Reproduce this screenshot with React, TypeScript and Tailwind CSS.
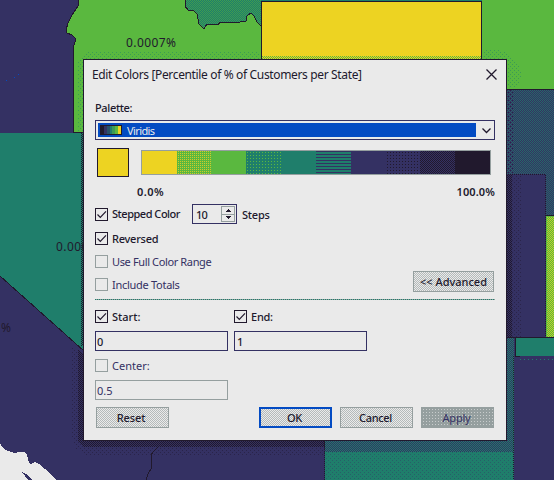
import React from "react";

const UI = "font-['Noto_Sans',sans-serif] text-[11px] leading-[14px] whitespace-nowrap";

const dots =
  "bg-[#e9e9e9] bg-[repeating-conic-gradient(#b4baba_0_25%,#eaeaea_0_50%)] bg-[length:2px_2px]";

function Dither({ id, base, dot, size = 2 }: { id: string; base: string; dot: string; size?: number }) {
  return (
    <pattern id={id} width={size} height={size} patternUnits="userSpaceOnUse">
      <rect width={size} height={size} fill={base} />
      <rect width="1" height="1" fill={dot} />
      <rect x={size / 2} y={size / 2} width="1" height="1" fill={dot} />
    </pattern>
  );
}

function StateMap() {
  return (
    <svg className="absolute inset-0" width="554" height="480" shapeRendering="crispEdges">
      <defs>
        <Dither id="tealGreen" base="#1f7e6b" dot="#3f9c50" />
        <Dither id="tealNavy" base="#343163" dot="#1f7e6b" />
        <Dither id="tealNavySoft" base="#343163" dot="#266868" />
        <Dither id="tealMostly" base="#1f7e6b" dot="#275f69" size={4} />
        <Dither id="yellowGreen" base="#5ab83f" dot="#c4cf2a" />
        <Dither id="yellowEdge" base="#edd322" dot="#5ab83f" />
        <Dither id="shadeDense" base="transparent" dot="#21192d" />
        <Dither id="shadeSparse" base="transparent" dot="#2a244a" size={4} />
        <Dither id="greenShade" base="transparent" dot="#3c9b55" size={4} />
      </defs>
      <rect width="554" height="480" fill="#343163" />
      <path d="M79 0L78 6L72 15L68 23L66 30L67 33L72 35L76 39L74 45L73 52V132H90V89H554V0Z" fill="#5ab83f" />
      <path d="M79 0L78 6L72 15L68 23L66 30L67 33L72 35L76 39L74 45L73 52V132" fill="none" stroke="#21192d" />
      <path d="M185 0V6L188 10L193 10L197 14L199 24L204 29L207 24L218 25L220 22L230 22L240 22L246 21L247 16L251 13L254 16L257 22L261 26V0Z" fill="url(#tealGreen)" />
      <path d="M185 0V6L188 10L193 10L197 14L199 24L204 29L207 24L218 25L220 22L230 22L240 22L246 21L247 16L251 13L254 16L257 22L261 26" fill="none" stroke="#21192d" />
      <rect x="261" width="221" height="2" fill="#1f7e6b" />
      <rect x="261.500" y="1.500" width="220" height="60" fill="#edd322" stroke="#21192d" />
      <rect x="262" y="56" width="219" height="3" fill="url(#yellowEdge)" />
      <path d="M90 51H260V59H83V132H77V60Z" fill="url(#greenShade)" />
      <path d="M483 50H500L511 55L519 64L521 75L517 88H507V59H483Z" fill="url(#greenShade)" />
      <rect x="500" y="90" width="54" height="127" fill="url(#tealNavySoft)" />
      <rect x="507" y="90" width="6" height="84" fill="url(#shadeSparse)" />
      <path d="M500 89.500H554" stroke="#21192d" />
      <rect x="500" y="174" width="45" height="163" fill="#343163" stroke="#21192d" strokeDasharray="1 1" />
      <rect x="546" y="216" width="10" height="121" fill="url(#yellowGreen)" stroke="#5ab83f" />
      <path d="M545 215.500H554M507 337H554" stroke="#21192d" />
      <rect x="507" y="338" width="7" height="142" fill="url(#tealNavy)" />
      <rect x="515" y="338" width="40" height="18" fill="#1f7e6b" />
      <path d="M515.500 338V356M515 356.500H520" stroke="#21192d" />
      <path d="M520 359.500H554" stroke="#1f7e6b" strokeDasharray="1 3" />
      <rect x="325" y="441" width="188" height="39" fill="url(#tealMostly)" />
      <rect x="325" y="441" width="188" height="11" fill="url(#tealNavy)" />
      <path d="M324.500 441V480M513.500 356V480" stroke="#21192d" strokeDasharray="1 1" />
      <path d="M0 133H84V351L0 276Z" fill="#1f7e6b" />
      <path d="M0 276L84 351M73 132.500H84" stroke="#21192d" fill="none" />
      <rect x="81" y="133" width="2" height="213" fill="url(#shadeDense)" />
      <path d="M78 350L83 354V441H325V447H84L78 440Z" fill="url(#shadeDense)" />
      <path d="M72 346L78 350V440L84 447H325V456H88L76 449L72 438Z" fill="url(#shadeSparse)" />
      <rect x="507" y="175" width="5" height="162" fill="url(#shadeDense)" />
      <rect x="512" y="176" width="9" height="161" fill="url(#shadeSparse)" />
      <path d="M0 443L3 448L8 451L15 453L18 452L24 452L27 455L29 463L31 464L35 462L39 464L45 469L57 480H32L28 475L22 472L28 480H0Z" fill="#eaeaea" />
      <path d="M163 442L153 452L151 455V469L148 474L146 480" stroke="#21192d" fill="none" />
      <path d="M6 80h1M14 77h1M18 74h1" stroke="#034bc3" />
    </svg>
  );
}

function Check({ on = false }: { on?: boolean }) {
  return (
    <span className={`flex size-[13px] shrink-0 items-center justify-center border ${on ? "border-[#21192d]" : "border-[#959f9f]"}`}>
      {on && (
        <svg width="11" height="11" fill="none" stroke="#21192d" strokeWidth="1.2">
          <path d="M1.500 5.500L4.300 8.300L10 2.300" />
        </svg>
      )}
    </span>
  );
}

function Option({ label, on = false, text = "" }: { label: string; on?: boolean; text?: string }) {
  return (
    <div className="flex h-[13px] items-center gap-[4px]">
      <Check on={on} />
      <span className={`${UI} ${on ? "font-medium text-[#21192d]" : "text-[#343163]"} ${text}`}>{label}</span>
    </div>
  );
}

function Button({ label, look }: { label: string; look: string }) {
  return <button className={`${UI} ${dots} h-[21px] shrink-0 font-medium text-[#21192d] ${look}`}>{label}</button>;
}

const steps = [
  "bg-[#edd322]",
  "bg-[#5ab83f] bg-[conic-gradient(#d0cb2a_0_25%,transparent_0)] bg-[length:2px_2px]",
  "bg-[#5ab83f]",
  "bg-[#1f7e6b] bg-[radial-gradient(#5ab83f_0.9px,transparent_0.9px)] bg-[length:3px_3px]",
  "bg-[#1f7e6b]",
  "bg-[repeating-linear-gradient(#343163_0_1px,#1f7e6b_1px_3px)]",
  "bg-[#343163]",
  "bg-[#343163] bg-[radial-gradient(#21192d_0.6px,transparent_0.6px)] bg-[length:3px_3px]",
  "bg-[repeating-conic-gradient(#21192d_0_25%,#343163_0_50%)] bg-[length:2px_2px]",
  "bg-[#21192d]",
];

const chip = ["bg-[#21192d]", "bg-[#343163]", "bg-[#29506a]", "bg-[#1f7e6b]", "bg-[#3c9b55]", "bg-[#5ab83f]", "bg-[#edd322]"];

export default function App() {
  return (
    <div className="relative h-[480px] w-[554px] overflow-hidden bg-[#343163]">
      <StateMap />
      <span className="absolute left-[126px] top-[34px] font-['Noto_Sans',sans-serif] text-[12px] leading-[17px] tracking-[0.4px] text-[#21192d]">0.0007%</span>
      <span className="absolute left-[56px] top-[238px] font-['Noto_Sans',sans-serif] text-[12px] leading-[17px] tracking-[0.4px] text-[#21192d]">0.0007%</span>
      <span className="absolute left-[1px] top-[319px] font-['Noto_Sans',sans-serif] text-[12px] leading-[17px] text-[#21192d]">%</span>

      <div className="absolute left-[83px] top-[59px] flex h-[382px] w-[424px] flex-col border border-[#21192d] bg-[#eaeaea] pl-[11px] pr-[11px]">
        <div className="-ml-[3px] -mr-[6px] flex h-[30px] shrink-0 items-center justify-between">
          <span className="whitespace-nowrap font-['Noto_Sans',sans-serif] text-[12px] tracking-[-0.35px] text-[#21192d]">Edit Colors [Percentile of % of Customers per State]</span>
          <svg width="18" height="12" fill="none" stroke="#21192d" strokeWidth="1.3">
            <path d="M3.500 .5L13.500 10.500M13.500 .5L3.500 10.500" />
          </svg>
        </div>

        <div className={`${UI} mt-[11px] h-[19px] font-medium tracking-[-0.35px] text-[#21192d]`}>Palette:</div>
        <div className="flex h-[20px] shrink-0 items-center border border-[#343163] pl-[2px]">
          <div className="flex h-[14px] w-[378px] items-center gap-[5px] bg-[#034bc3] pl-[2px]">
            <span className="flex h-[10px] w-[22px] border border-[#21192d]">
              {chip.map((c) => <i key={c} className={`flex-1 ${c}`} />)}
            </span>
            <span className={`${UI} pt-px tracking-[-0.6px] text-[#eaeaea]`}>Viridis</span>
          </div>
          <svg className="ml-[5px]" width="11" height="10" fill="none" stroke="#21192d" strokeWidth="1.3">
            <path d="M1.500 3.500L5.500 7.500L9.500 3.500" />
          </svg>
        </div>

        <div className="mt-[8px] flex h-[29px] shrink-0 items-start pl-[2px]">
          <div className="h-[29px] w-[32px] border border-[#21192d] bg-[#edd322]" />
          <div className="ml-[12px] mt-[2px] flex h-[25px] w-[350px] border border-[#959f9f]">
            {steps.map((s) => <div key={s} className={`flex-1 ${s}`} />)}
          </div>
        </div>
        <div className={`${UI} mt-[8px] flex h-[14px] shrink-0 justify-between pl-[42px] font-semibold text-[#21192d]`}>
          <span className="tracking-[0.5px]">0.0%</span>
          <span className="tracking-[0.1px]">100.0%</span>
        </div>

        <div className="mt-[5px] flex h-[20px] shrink-0 items-center">
          <div className="w-[97px]"><Option on label="Stepped Color" text="tracking-[-0.48px]" /></div>
          <div className="flex h-[20px] w-[45px] items-center justify-between border border-[#343163] pl-[3px] pr-px">
            <span className={`${UI} pt-px font-medium tracking-[-0.8px] text-[#21192d]`}>10</span>
            <svg width="14" height="16" shapeRendering="crispEdges">
              <path d="M.5 .5H13.500V15.500H.5ZM0 8.500H14" fill="none" stroke="#959f9f" />
              <path d="M4 6H10L7 3ZM4 10H10L7 13Z" fill="#21192d" />
            </svg>
          </div>
          <span className={`${UI} ml-[5px] pt-px font-medium tracking-[-0.2px] text-[#21192d]`}>Steps</span>
        </div>

        <div className="mt-[8px] flex h-[60px] shrink-0 items-end justify-between">
          <div className="flex h-[60px] flex-col">
            <Option on label="Reversed" text="tracking-[-0.25px]" />
            <div className="mt-[10px]"><Option label="Use Full Color Range" text="tracking-[-0.37px]" /></div>
            <div className="mt-[10px]"><Option label="Include Totals" text="tracking-[-0.28px]" /></div>
          </div>
          <Button label="<< Advanced" look="w-[81px] mr-px border border-[#959f9f]" />
        </div>

        <div className="mt-[7px] h-px shrink-0 bg-[repeating-linear-gradient(90deg,#1f7e6b_0_1px,#959f9f_1px_2px)]" />

        <div className="mt-[10px] grid grid-cols-[133px_133px] gap-x-[6px] gap-y-[8px]">
          <Option on label="Start:" />
          <Option on label="End:" text="tracking-[-0.25px]" />
          <div className={`${UI} flex h-[20px] items-center border border-[#343163] pl-[1px] pt-px font-medium text-[#21192d]`}>0</div>
          <div className={`${UI} flex h-[20px] items-center border border-[#343163] pl-[2px] pt-px font-medium text-[#21192d]`}>1</div>
          <Option label="Center:" />
        </div>
        <div className={`${UI} mt-[8px] flex h-[20px] w-[133px] shrink-0 items-center border border-[#959f9f] pl-[1px] pt-px text-[#343163]`}>0.5</div>

        <div className="mt-[7px] flex shrink-0 gap-[8px] px-px">
          <Button label="Reset" look="w-[73px] mr-auto border border-[#959f9f] pr-[3px] tracking-[-0.1px]" />
          <Button label="OK" look="w-[73px] border-2 border-[#034bc3] pr-[2px] tracking-[-0.4px]" />
          <Button label="Cancel" look="w-[73px] border border-[#959f9f] pr-[2px] tracking-[-0.35px]" />
          <button className={`${UI} h-[21px] w-[73px] border border-[#959f9f] bg-[#959f9f] bg-[radial-gradient(#c8cccc_0.7px,transparent_0.7px)] bg-[length:3px_3px] pr-[2px] tracking-[-0.2px] text-[#343163]`}>Apply</button>
        </div>
      </div>
    </div>
  );
}
